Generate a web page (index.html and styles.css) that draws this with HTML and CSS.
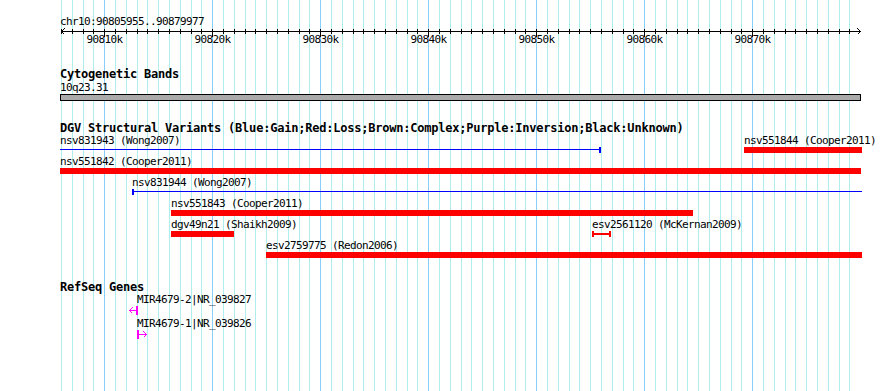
FILE: index.html
```html
<!DOCTYPE html>
<html lang="en">

<head>
    <meta charset="UTF-8">
    <meta name="viewport" content="width=device-width, initial-scale=1.0">
    <title>chr10:90805955..90879977</title>
    <link rel="stylesheet" href="styles.css">
</head>

<body>
    <div class="browser">
        <svg class="grid" id="grid" width="890" height="391"></svg>

        <div class="ruler">
            <div class="ruler-title">chr10:90805955..90879977</div>
            <svg class="axis" id="axis" width="890" height="20"></svg>
        </div>

        <div class="track track-cyto">
            <h3 class="track-title">Cytogenetic Bands</h3>
            <div class="band-label">10q23.31</div>
            <div class="band"></div>
        </div>

        <div class="track track-dgv">
            <h3 class="track-title">DGV Structural Variants (Blue:Gain;Red:Loss;Brown:Complex;Purple:Inversion;Black:Unknown)</h3>
            <div class="row">
                <div class="feat" style="left: 60px;">
                    <span class="feat-label">nsv831943 (Wong2007)</span>
                    <div class="line gain cap-right" style="width: 541px;"></div>
                </div>
                <div class="feat" style="left: 744px;">
                    <span class="feat-label">nsv551844 (Cooper2011)</span>
                    <div class="bar loss" style="width: 118px;"></div>
                </div>
            </div>
            <div class="row">
                <div class="feat" style="left: 60px;">
                    <span class="feat-label">nsv551842 (Cooper2011)</span>
                    <div class="bar loss" style="width: 801px;"></div>
                </div>
            </div>
            <div class="row">
                <div class="feat" style="left: 132px;">
                    <span class="feat-label">nsv831944 (Wong2007)</span>
                    <div class="line gain cap-left" style="width: 730px;"></div>
                </div>
            </div>
            <div class="row">
                <div class="feat" style="left: 171px;">
                    <span class="feat-label">nsv551843 (Cooper2011)</span>
                    <div class="bar loss" style="width: 522px;"></div>
                </div>
            </div>
            <div class="row">
                <div class="feat" style="left: 171px;">
                    <span class="feat-label">dgv49n21 (Shaikh2009)</span>
                    <div class="bar loss" style="width: 63px;"></div>
                </div>
                <div class="feat" style="left: 592px;">
                    <span class="feat-label">esv2561120 (McKernan2009)</span>
                    <div class="line loss thick cap-left cap-right" style="width: 19px;"></div>
                </div>
            </div>
            <div class="row">
                <div class="feat" style="left: 266px;">
                    <span class="feat-label">esv2759775 (Redon2006)</span>
                    <div class="bar loss" style="width: 596px;"></div>
                </div>
            </div>
        </div>

        <div class="track track-genes">
            <h3 class="track-title">RefSeq Genes</h3>
            <div class="gene-row">
                <div class="feat" style="left: 137px;">
                    <span class="feat-label">MIR4679-2|NR_039827</span>
                    <svg class="gene minus" width="10" height="9">
                        <line x1="0.5" y1="4.5" x2="7" y2="4.5" />
                        <polyline points="3.5,1.5 0.5,4.5 3.5,7.5" />
                        <rect x="7" y="0" width="2" height="9" />
                    </svg>
                </div>
            </div>
            <div class="gene-row">
                <div class="feat" style="left: 137px;">
                    <span class="feat-label">MIR4679-1|NR_039826</span>
                    <svg class="gene plus" width="11" height="9">
                        <rect x="0" y="0" width="2" height="9" />
                        <line x1="2" y1="4.5" x2="9.5" y2="4.5" />
                        <polyline points="6.5,1.5 9.5,4.5 6.5,7.5" />
                    </svg>
                </div>
            </div>
        </div>
    </div>

    <script src="script.js"></script>
</body>

</html>
```

FILE: styles.css
```css
body {
    margin: 0;
    padding: 0;
    background-color: #fff;
}

.browser {
    position: relative;
    width: 890px;
    height: 391px;
    overflow: hidden;
    font-family: "DejaVu Sans Mono", monospace;
    font-size: 11px;
    letter-spacing: -0.62px;
    line-height: 13px;
    color: #000;
}

.grid {
    position: absolute;
    top: 0;
    left: 0;
}

.grid line {
    stroke: #afeeee;
    stroke-width: 1;
    shape-rendering: crispEdges;
}

.grid line.major {
    stroke: #87cefa;
}

.ruler,
.track {
    position: relative;
}

.ruler {
    padding-top: 15px;
}

.ruler-title {
    padding-left: 60px;
}

.axis {
    display: block;
}

.axis line,
.axis polyline {
    stroke: #000;
    stroke-width: 1;
    fill: none;
    shape-rendering: crispEdges;
}

.axis text {
    font-family: "DejaVu Sans Mono", monospace;
    font-size: 11px;
    letter-spacing: -0.62px;
    fill: #000;
}

.track-title {
    margin: 0;
    padding-left: 60px;
    font-size: 12px;
    letter-spacing: -0.22px;
    font-weight: bold;
    line-height: 12px;
    white-space: nowrap;
}

.track-cyto {
    margin-top: 20px;
}

.band-label {
    margin-top: 1px;
    padding-left: 60px;
}

.band {
    margin-left: 60px;
    width: 801px;
    height: 7px;
    box-sizing: border-box;
    border: 1px solid #000;
    background-color: #aaaaaa;
}

.track-dgv {
    margin-top: 21px;
}

.track-genes {
    margin-top: 21px;
}

.row {
    position: relative;
    height: 21px;
}

.gene-row {
    position: relative;
    height: 24px;
}

.feat {
    position: absolute;
    top: 0;
}

.feat-label {
    display: block;
    white-space: nowrap;
}

.bar {
    height: 6px;
}

.bar.loss {
    background-color: #ff0000;
}

.line {
    height: 6px;
    box-sizing: border-box;
    border: 0 solid currentColor;
    background: linear-gradient(currentColor, currentColor) 0 2px / 100% 1px no-repeat;
}

.line.thick {
    background-size: 100% 2px;
}

.line.gain {
    color: #0000ff;
}

.line.loss {
    color: #ff0000;
}

.cap-left {
    border-left-width: 2px;
}

.cap-right {
    border-right-width: 2px;
}

.gene {
    display: block;
    shape-rendering: crispEdges;
}

.gene.minus {
    margin-left: -8px;
}

.gene line,
.gene polyline {
    stroke: #ff00ff;
    stroke-width: 1;
    fill: none;
}

.gene rect {
    fill: #ff00ff;
}
```

FILE: script.js
```js
const NS = 'http://www.w3.org/2000/svg';
const grid = document.getElementById('grid');
const axis = document.getElementById('axis');

// one grid line per kb, first at 90806000, last at 90879000
const FIRST_KB = 90806;
const LAST_KB = 90879;

function el(name, attrs) {
    const node = document.createElementNS(NS, name);
    for (const key in attrs) {
        node.setAttribute(key, attrs[key]);
    }
    return node;
}

function xForKb(kb) {
    return Math.round(61 + 10.8 * (kb - FIRST_KB)) + 0.5;
}

for (let kb = FIRST_KB; kb <= LAST_KB; kb++) {
    const x = xForKb(kb);
    const major = kb % 10 === 0;

    grid.appendChild(el('line', {
        x1: x, y1: 0, x2: x, y2: 391,
        class: major ? 'major' : ''
    }));

    axis.appendChild(el('line', {
        x1: x, y1: 1, x2: x, y2: major ? 9 : 6
    }));

    if (major) {
        const label = el('text', { x: x, y: 15, 'text-anchor': 'middle' });
        label.textContent = kb + 'k';
        axis.appendChild(label);
    }
}

// axis line with arrow heads at both ends
axis.appendChild(el('line', { x1: 61, y1: 3.5, x2: 861, y2: 3.5 }));
axis.appendChild(el('polyline', { points: '64.5,0.5 61.5,3.5 64.5,6.5' }));
axis.appendChild(el('polyline', { points: '857.5,0.5 860.5,3.5 857.5,6.5' }));
```
